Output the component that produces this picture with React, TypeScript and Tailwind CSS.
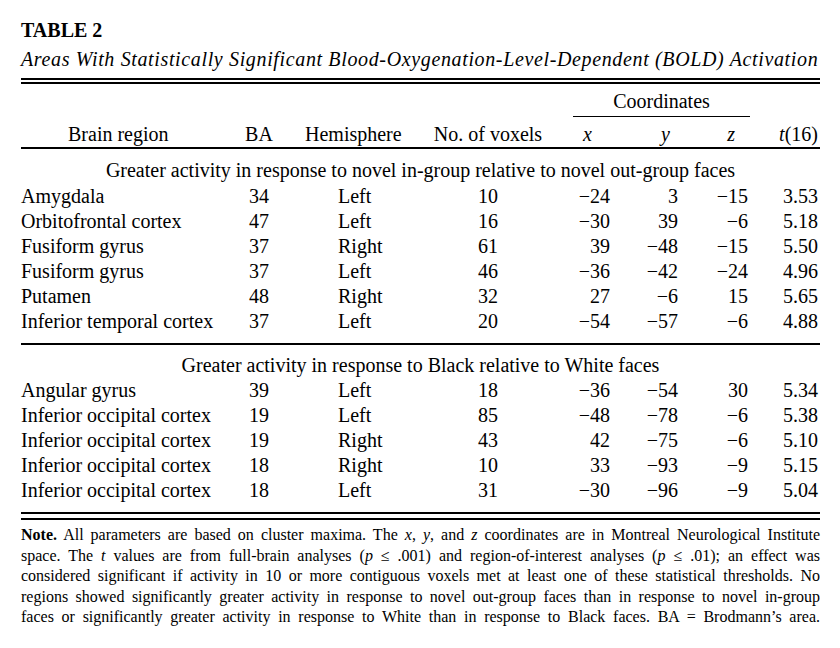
import React from "react";

type R = [string, string, string, string, string, string, string, string];

const sec1: R[] = [
  ["Amygdala", "34", "Left", "10", "−24", "3", "−15", "3.53"],
  ["Orbitofrontal cortex", "47", "Left", "16", "−30", "39", "−6", "5.18"],
  ["Fusiform gyrus", "37", "Right", "61", "39", "−48", "−15", "5.50"],
  ["Fusiform gyrus", "37", "Left", "46", "−36", "−42", "−24", "4.96"],
  ["Putamen", "48", "Right", "32", "27", "−6", "15", "5.65"],
  ["Inferior temporal cortex", "37", "Left", "20", "−54", "−57", "−6", "4.88"],
];

const sec2: R[] = [
  ["Angular gyrus", "39", "Left", "18", "−36", "−54", "30", "5.34"],
  ["Inferior occipital cortex", "19", "Left", "85", "−48", "−78", "−6", "5.38"],
  ["Inferior occipital cortex", "19", "Right", "43", "42", "−75", "−6", "5.10"],
  ["Inferior occipital cortex", "18", "Right", "10", "33", "−93", "−9", "5.15"],
  ["Inferior occipital cortex", "18", "Left", "31", "−30", "−96", "−9", "5.04"],
];

function Row({ r }: { r: R }) {
  return (
    <div className="grid grid-cols-[209px_58px_130px_140px_52px_68px_70px_72px] h-[25px] leading-[25px] whitespace-nowrap">
      <div>{r[0]}</div>
      <div className="text-center">{r[1]}</div>
      <div className="pl-[50px]">{r[2]}</div>
      <div className="text-center">{r[3]}</div>
      <div className="text-right">{r[4]}</div>
      <div className="text-right">{r[5]}</div>
      <div className="text-right">{r[6]}</div>
      <div className="text-right pr-[2px]">{r[7]}</div>
    </div>
  );
}

const lineCls =
  "text-justify [text-align-last:justify] whitespace-nowrap text-[16px] leading-[20.5px]";

export default function App() {
  return (
    <div className="w-[840px] h-[648px] bg-white text-black font-['Liberation_Serif',serif] pl-[21px]">
      <div className="w-[799px] flex flex-col">
        <div className="pt-[18px] text-[20px] leading-[24px] font-bold">TABLE 2</div>
        <div className="mt-[5px] text-[20px] leading-[24px] italic tracking-[0.64px] whitespace-nowrap">
          Areas With Statistically Significant Blood-Oxygenation-Level-Dependent (BOLD) Activation
        </div>
        <div className="mt-[7px] h-[6px] border-t-2 border-b-2 border-black" />

        <div className="text-[20px]">
          <div className="grid grid-cols-[209px_58px_130px_140px_52px_68px_70px_72px] pt-[5px]">
            <div className="col-start-5 col-span-3 ml-[15px] mr-[-2px] h-[28px] leading-[25px] text-center border-b border-black">
              Coordinates
            </div>
          </div>
          <div className="grid grid-cols-[209px_58px_130px_140px_52px_68px_70px_72px] mt-[5px] h-[25px] leading-[25px] whitespace-nowrap">
            <div className="pl-[47px]">Brain region</div>
            <div className="text-center">BA</div>
            <div className="pl-[17px]">Hemisphere</div>
            <div className="text-center">No. of voxels</div>
            <div className="text-right pr-[18px] italic">x</div>
            <div className="text-right pr-[8px] italic">y</div>
            <div className="text-right pr-[13px] italic">z</div>
            <div className="text-right pr-[2px]">
              <span className="italic">t</span>(16)
            </div>
          </div>
          <div className="h-[2px] bg-black" />

          <div className="pt-[8px] h-[35px] leading-[27px] text-center whitespace-nowrap">
            Greater activity in response to novel in-group relative to novel out-group faces
          </div>
          {sec1.map((r, i) => (
            <Row key={i} r={r} />
          ))}
          <div className="mt-[9px] h-[2px] bg-black" />

          <div className="pt-[7px] h-[33px] leading-[26px] text-center whitespace-nowrap">
            Greater activity in response to Black relative to White faces
          </div>
          {sec2.map((r, i) => (
            <Row key={i} r={r} />
          ))}
          <div className="mt-[9px] h-[8px] border-t-2 border-b-2 border-black" />
        </div>

        <div className="mt-[5px]">
          <div className={lineCls}>
            <span className="font-bold">Note.</span> All parameters are based on cluster maxima. The{" "}
            <span className="italic">x</span>, <span className="italic">y</span>, and{" "}
            <span className="italic">z</span> coordinates are in Montreal Neurological Institute
          </div>
          <div className={lineCls}>
            space. The <span className="italic">t</span> values are from full-brain analyses (
            <span className="italic">p</span> ≤ .001) and region-of-interest analyses (
            <span className="italic">p</span> ≤ .01); an effect was
          </div>
          <div className={lineCls}>
            considered significant if activity in 10 or more contiguous voxels met at least one of these statistical thresholds. No
          </div>
          <div className={lineCls}>
            regions showed significantly greater activity in response to novel out-group faces than in response to novel in-group
          </div>
          <div className={lineCls}>
            faces or significantly greater activity in response to White than in response to Black faces. BA = Brodmann’s area.
          </div>
        </div>
      </div>
    </div>
  );
}
